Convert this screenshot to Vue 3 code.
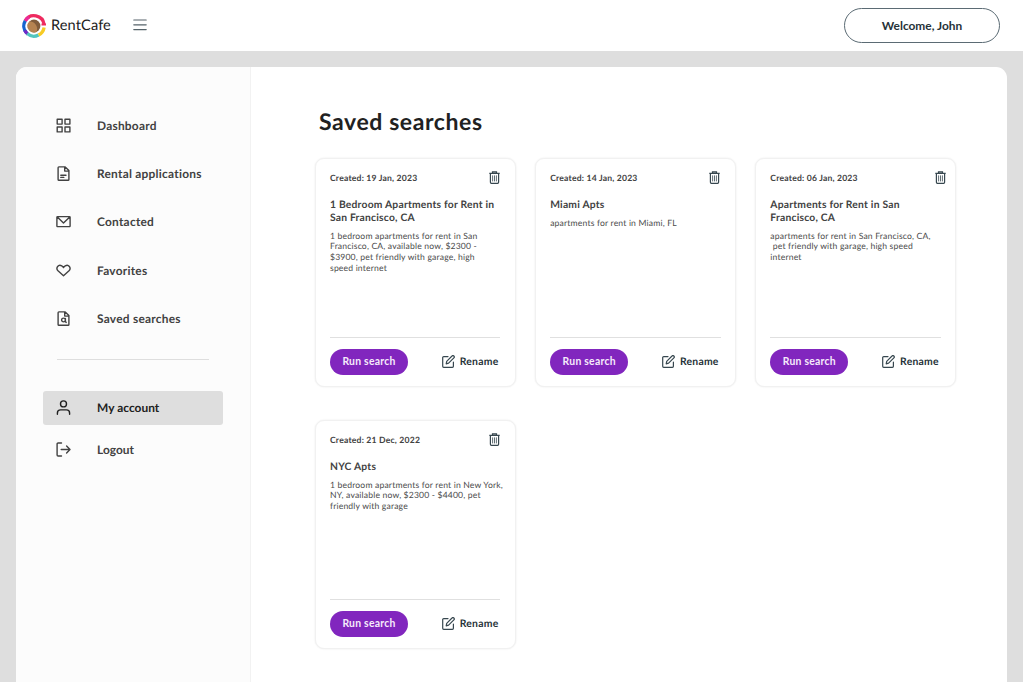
<script setup>
const nav = [
  { label: 'Dashboard', icon: 'grid' },
  { label: 'Rental applications', icon: 'doc' },
  { label: 'Contacted', icon: 'mail' },
  { label: 'Favorites', icon: 'heart' },
  { label: 'Saved searches', icon: 'docsearch' }
]
const account = [
  { label: 'My account', icon: 'user', active: true },
  { label: 'Logout', icon: 'logout' }
]
const cards = [
  {
    date: '19 Jan, 2023',
    title: ['1 Bedroom Apartments for Rent in', 'San Francisco, CA'],
    text: ['1 bedroom apartments for rent in San', 'Francisco, CA, available now, $2300 -', '$3900, pet friendly with garage, high', 'speed internet']
  },
  { date: '14 Jan, 2023', title: ['Miami Apts'], text: ['apartments for rent in Miami, FL'] },
  {
    date: '06 Jan, 2023',
    wide: true,
    title: ['Apartments for Rent in San', 'Francisco, CA'],
    text: ['apartments for rent in San Francisco, CA,', '\u00a0pet friendly with garage, high speed', 'internet']
  },
  {
    date: '21 Dec, 2022',
    title: ['NYC Apts'],
    text: ['1 bedroom apartments for rent in New York,', 'NY, available now, $2300 - $4400, pet', 'friendly with garage']
  }
]
const icons = {
  grid: 'M1.2 1.2h4.9v4.9H1.2zM9 1.2h4.9v4.9H9zM1.2 9h4.9v4.9H1.2zM9 9h4.9v4.9H9z',
  doc: 'M2.9.9h6.3l3.7 3.7v8.8a.8.8 0 0 1-.8.8H2.9a.8.8 0 0 1-.8-.8V1.7a.8.8 0 0 1 .8-.8zM8.7 1v4.1h4.1M4.8 9.2h5.2M4.8 11.4h3',
  mail: 'M1.6 2.6h11.8a.7.7 0 0 1 .7.7v8.6a.7.7 0 0 1-.7.7H1.6a.7.7 0 0 1-.7-.7V3.3a.7.7 0 0 1 .7-.7zM1.3 3l6.2 6L13.7 3',
  heart: 'M7.5 12.7 2 7.8C-.7 4.9 2.5 1 5.7 2.9c.7.4 1.3 1 1.8 1.7.5-.7 1.1-1.3 1.8-1.7 3.2-1.9 6.4 2 3.7 4.9z',
  docsearch: 'M2.9.9h6.3l3.7 3.7v8.8a.8.8 0 0 1-.8.8H2.9a.8.8 0 0 1-.8-.8V1.7a.8.8 0 0 1 .8-.8zM8.7 1v4.1h4.1M9.4 9a1.9 1.9 0 1 1-3.8 0 1.9 1.9 0 0 1 3.8 0zM9.4 7.5v3.3l.8.6',
  user: 'M10.5 3.9a3 3 0 1 1-6 0 3 3 0 0 1 6 0zM1.4 14.2v-1.3c0-2 1.4-3 3.2-3h5.8c1.8 0 3.2 1 3.2 3v1.3',
  logout: 'M5.5 1H2.1a1 1 0 0 0-1 1v11a1 1 0 0 0 1 1h3.4M5.2 7.5h8.6M10.6 4.1 14 7.5l-3.4 3.4'
}
</script>

<template>
  <div class="page">
    <header class="topbar">
      <svg class="mark" viewBox="0 0 24 24">
        <g fill="none" stroke-width="3.3">
          <path d="M3.2 6.8A10.2 10.2 0 0 1 22.1 10.5" stroke="#ee2a5f" />
          <path d="M3.2 6.8A10.2 10.2 0 0 1 7.2 3" stroke="#e92a9a" />
          <path d="M4.6 19A10.2 10.2 0 0 1 3.2 6.8" stroke="#1464cf" />
          <path d="M5.8 20.1A10.2 10.2 0 0 1 2.8 16.4" stroke="#7428c6" />
          <path d="M16.6 21A10.2 10.2 0 0 1 5.2 19.6" stroke="#52c5bd" />
          <path d="M22.1 13.5A10.2 10.2 0 0 1 16.6 21" stroke="#f7cb25" />
        </g>
        <path d="M19.5 10.5H24" stroke="#ee2a5f" stroke-width="2" />
        <circle cx="12" cy="12" r="6.4" fill="#805c3b" />
        <path d="M7.5 7.4C12 7 17 12 14.5 17.9A6.4 6.4 0 0 1 7.5 7.4z" fill="#b58351" />
      </svg>
      <span class="brand">RentCafe</span>
      <svg class="burger" viewBox="0 0 14 12"><path d="M.8 1h12.4M.8 5.8h12.4M.8 10.6h12.4" /></svg>
      <button class="welcome"><span>Welcome, John</span></button>
    </header>
    <div class="panel">
      <aside class="side">
        <a v-for="n in nav" :key="n.label" class="item">
          <svg viewBox="0 0 15 15"><path :d="icons[n.icon]" /></svg><span>{{ n.label }}</span>
        </a>
        <div class="rule"></div>
        <a v-for="n in account" :key="n.label" class="item acct" :class="{ active: n.active }">
          <svg viewBox="0 0 15 15"><path :d="icons[n.icon]" /></svg><span>{{ n.label }}</span>
        </a>
      </aside>
      <main class="main">
        <h1>Saved searches</h1>
        <div class="cards">
          <article v-for="c in cards" :key="c.date" class="card">
            <div class="head" :class="{ wide: c.wide }">
              <span class="date">Created: {{ c.date }}</span>
              <svg class="trash" viewBox="0 0 11 13">
                <path d="M.3 2.3h10.4M3.5 2V.8h4V2M1.4 2.5v8.8a1 1 0 0 0 1 1h6.2a1 1 0 0 0 1-1V2.5" />
                <path class="thin" d="M3.6 4.4v6M5.5 4.4v6M7.4 4.4v6" />
              </svg>
            </div>
            <h2><span v-for="l in c.title" :key="l">{{ l }}</span></h2>
            <p><span v-for="l in c.text" :key="l">{{ l }}</span></p>
            <div class="foot">
              <button class="run">Run search</button>
              <a class="rename">
                <svg viewBox="0 0 13 13">
                  <path d="M6 1.6H1.7a1 1 0 0 0-1 1v8.7a1 1 0 0 0 1 1h8.7a1 1 0 0 0 1-1V7" />
                  <path d="M4.2 8.8l.5-2.5L10 1a1.2 1.2 0 0 1 1.9 1.8L6.6 8.2z" />
                </svg>
                <span>Rename</span>
              </a>
            </div>
          </article>
        </div>
      </main>
    </div>
  </div>
</template>

<style>
body { background: #dedede; overflow: hidden; }
</style>

<style scoped>
* { box-sizing: border-box; }
.page { height: 682px; overflow: hidden; background: #dedede; font-family: Lato, "Open Sans", sans-serif; color: #424242; display: flex; flex-direction: column; text-rendering: geometricPrecision; }
button { font-family: inherit; margin: 0; padding: 0; }
.topbar { height: 51px; flex: none; background: #fff; display: flex; align-items: center; padding: 0 23px 0 22px; }
.mark { width: 24px; height: 24px; }
.brand { margin: -1px 0 0 5px; width: 82px; font-size: 14.6px; letter-spacing: .1px; color: #222; white-space: nowrap; }
.burger { width: 14px; height: 12px; margin-top: -1px; }
.burger path { stroke: #56636a; stroke-width: 1.2; stroke-linecap: round; }
.welcome { margin-left: auto; width: 156px; height: 35px; border: 1px solid #5b6b74; border-radius: 18px; background: #fff; font-size: 11.9px; font-weight: 700; color: #263238; white-space: nowrap; }
.panel { margin: 16px 16px 0; height: 640px; border-radius: 11px 11px 0 0; background: #fff; display: flex; overflow: hidden; }
.side { width: 235px; flex: none; background: #fcfcfc; border-right: 1px solid #f2f2f2; padding: 41px 27.5px 0 27px; }
.item { height: 34px; margin-bottom: 14.4px; padding-left: 13px; display: flex; align-items: center; border-radius: 3px; font-size: 11.9px; font-weight: 700; letter-spacing: .25px; }
.item svg { width: 15px; height: 15px; margin-right: 26px; flex: none; }
.item path { fill: none; stroke: #424242; stroke-width: 1.4; stroke-linecap: round; stroke-linejoin: round; }
.item span { white-space: nowrap; }
.rule { height: 1px; width: 152px; margin: 23px 0 31px 14px; background: #dedede; }
.acct { margin-bottom: 7.5px; letter-spacing: .05px; }
.acct.active { background: #dedede; color: #212121; }
.acct.active path { stroke: #212121; }
.main { padding: 40px 0 0 63.6px; }
h1 { margin: -1px 0 22px 4.4px; height: 30px; line-height: 30px; font-size: 23px; letter-spacing: .6px; font-weight: 700; color: #212121; white-space: nowrap; }
.cards { display: grid; grid-template-columns: repeat(3, 201px); grid-auto-rows: 229px; column-gap: 19.2px; row-gap: 33px; }
.card { border: 1px solid #f1f1f1; border-radius: 9px; box-shadow: 0 0 2px rgba(0,0,0,.09); background: #fff; padding: 13px 14.5px 0 14.4px; display: flex; flex-direction: column; margin-top: -.5px; }
.head { display: flex; justify-content: space-between; align-items: center; height: 14px; width: 170.3px; margin-top: -1px; }
.head.wide { width: 176px; }
.date { font-size: 8.6px; font-weight: 700; letter-spacing: .2px; white-space: nowrap; }
.trash { width: 11px; height: 13px; }
.trash path { fill: none; stroke: #37474f; stroke-width: 1.2; }
.trash .thin { stroke-width: .8; }
h2 { margin: 14px 0 0; font-size: 10.3px; letter-spacing: .22px; line-height: 13px; font-weight: 700; }
h2 span, p span { display: block; white-space: nowrap; }
p { margin: 6px 0 0; font-size: 8.6px; letter-spacing: .17px; line-height: 10.7px; color: #4b4b4b; }
.foot { margin-top: auto; height: 49.5px; width: 170.5px; border-top: 1px solid #e0e0e0; padding: 11px 2px 0 0; display: flex; justify-content: space-between; align-items: flex-start; }
.run { width: 78px; height: 26px; border: 0; border-radius: 13px; background: #8126be; color: #f6ebfb; font-size: 10.4px; letter-spacing: .25px; font-weight: 700; padding-bottom: 1px; }
.rename { height: 26px; display: flex; align-items: center; gap: 5px; font-size: 10.4px; letter-spacing: .25px; font-weight: 700; color: #263238; }
.rename svg { width: 13px; height: 13px; }
.rename path { fill: none; stroke: #37474f; stroke-width: 1.2; stroke-linejoin: round; stroke-linecap: round; }
</style>
